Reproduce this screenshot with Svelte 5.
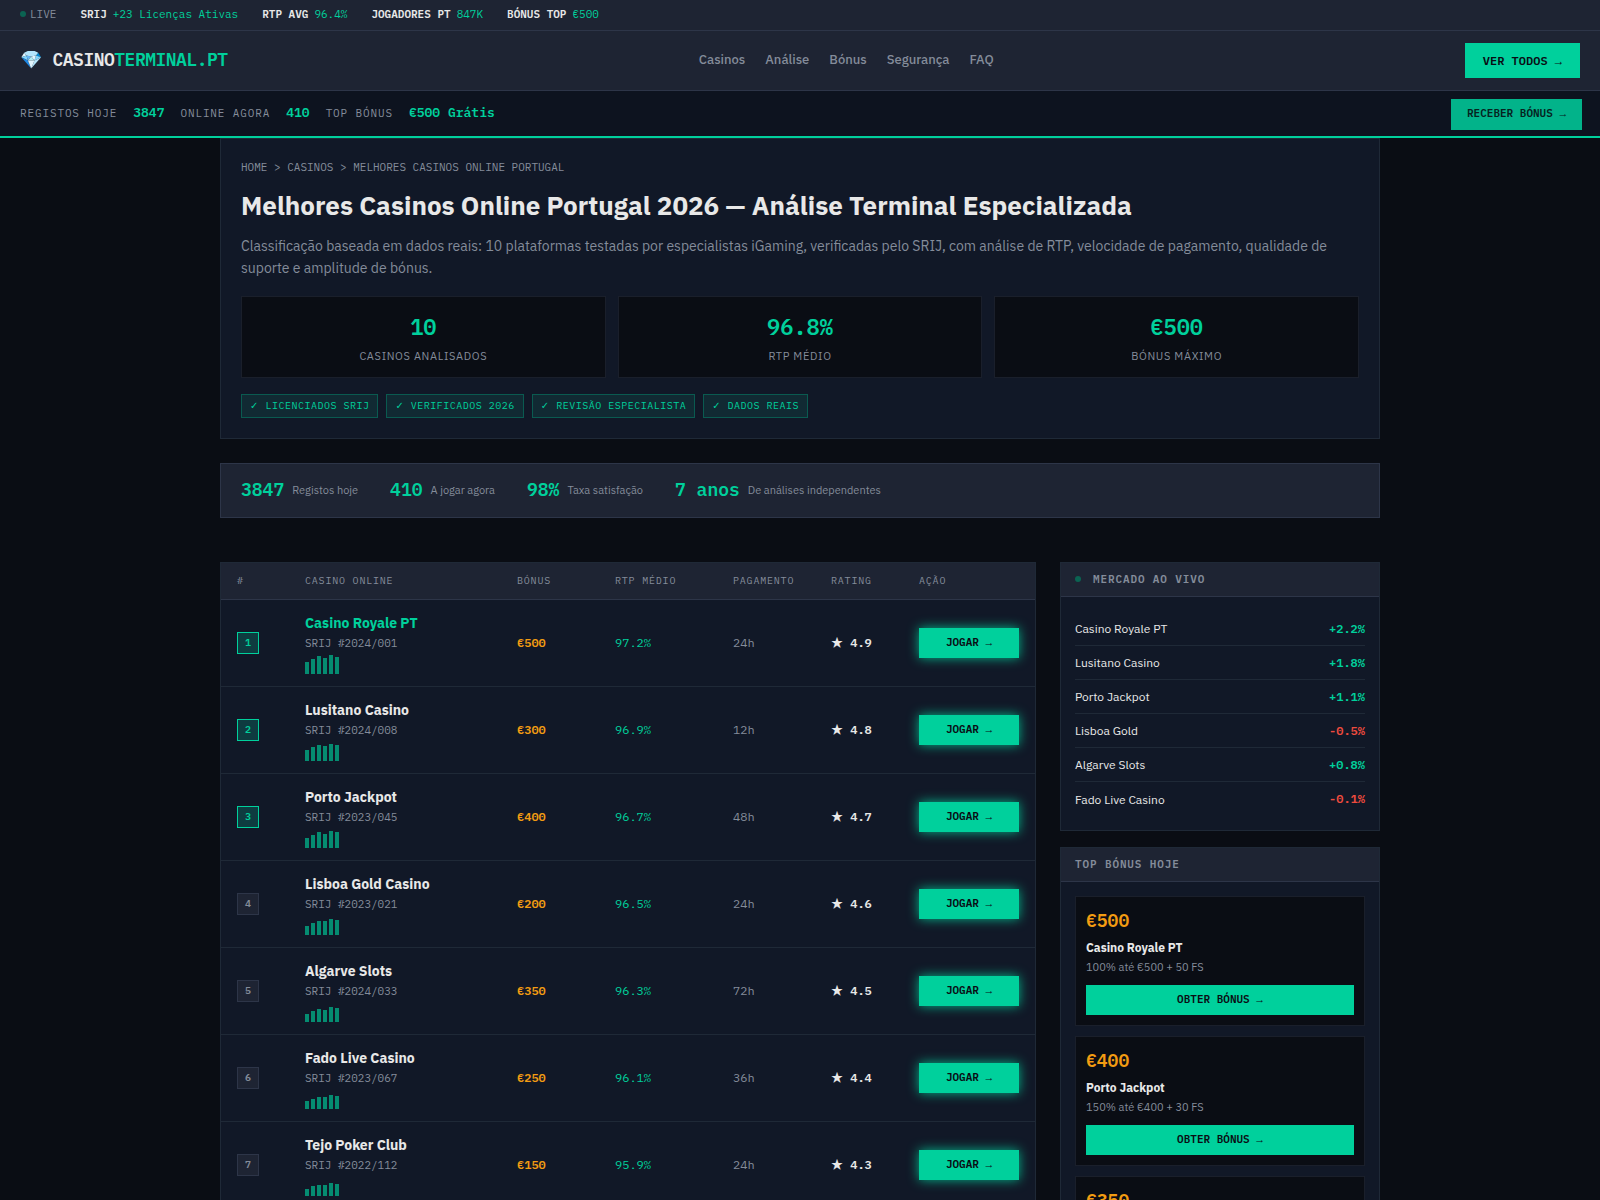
<script>
  const ticker = [
    ['SRIJ', '+23 Licenças Ativas'],
    ['RTP AVG', '96.4%'],
    ['JOGADORES PT', '847K'],
    ['BÓNUS TOP', '€500']
  ];
  const nav = ['Casinos', 'Análise', 'Bónus', 'Segurança', 'FAQ'];
  const live = [
    ['REGISTOS HOJE', '3847'],
    ['ONLINE AGORA', '410'],
    ['TOP BÓNUS', '€500 Grátis']
  ];
  const stats = [
    ['10', 'CASINOS ANALISADOS'],
    ['96.8%', 'RTP MÉDIO'],
    ['€500', 'BÓNUS MÁXIMO']
  ];
  const badges = ['LICENCIADOS SRIJ', 'VERIFICADOS 2026', 'REVISÃO ESPECIALISTA', 'DADOS REAIS'];
  const proof = [
    ['3847', 'Registos hoje'],
    ['410', 'A jogar agora'],
    ['98%', 'Taxa satisfação'],
    ['7 anos', 'De análises independentes']
  ];
  const casinos = [
    { name: 'Casino Royale PT', id: '2024/001', bonus: '€500', rtp: '97.2%', pay: '24h', rating: '4.9', bars: [12, 15, 18, 16, 19, 17] },
    { name: 'Lusitano Casino', id: '2024/008', bonus: '€300', rtp: '96.9%', pay: '12h', rating: '4.8', bars: [11, 14, 16, 15, 17, 16] },
    { name: 'Porto Jackpot', id: '2023/045', bonus: '€400', rtp: '96.7%', pay: '48h', rating: '4.7', bars: [10, 13, 16, 14, 17, 16] },
    { name: 'Lisboa Gold Casino', id: '2023/021', bonus: '€200', rtp: '96.5%', pay: '24h', rating: '4.6', bars: [9, 12, 14, 14, 16, 15] },
    { name: 'Algarve Slots', id: '2024/033', bonus: '€350', rtp: '96.3%', pay: '72h', rating: '4.5', bars: [8, 11, 13, 12, 15, 14] },
    { name: 'Fado Live Casino', id: '2023/067', bonus: '€250', rtp: '96.1%', pay: '36h', rating: '4.4', bars: [8, 10, 12, 12, 14, 13] },
    { name: 'Tejo Poker Club', id: '2022/112', bonus: '€150', rtp: '95.9%', pay: '24h', rating: '4.3', bars: [7, 10, 11, 11, 13, 12] }
  ];
  const market = [
    ['Casino Royale PT', '+2.2%'],
    ['Lusitano Casino', '+1.8%'],
    ['Porto Jackpot', '+1.1%'],
    ['Lisboa Gold', '-0.5%'],
    ['Algarve Slots', '+0.8%'],
    ['Fado Live Casino', '-0.1%']
  ];
  const offers = [
    ['€500', 'Casino Royale PT', '100% até €500 + 50 FS'],
    ['€400', 'Porto Jackpot', '150% até €400 + 30 FS'],
    ['€350', 'Algarve Slots', '100% até €350 + 40 FS']
  ];
</script>

<div class="ticker">
  <span class="live"><i class="dot"></i>LIVE</span>
  {#each ticker as [label, value]}
    <span class="quote"><b>{label}</b><span class="up">{value}</span></span>
  {/each}
</div>

<header class="header">
  <a class="logo" href="#top"><span class="gem">💎</span><span>CASINO<span class="up">TERMINAL.PT</span></span></a>
  <nav>
    {#each nav as item}<a href="#{item}">{item}</a>{/each}
  </nav>
  <button class="btn large">VER TODOS <span class="sym">→</span></button>
</header>

<div class="livebar">
  {#each live as [label, value]}
    <span class="label">{label}</span>
    <b class="up">{value}</b>
  {/each}
  <button class="btn pulse">RECEBER BÓNUS <span class="sym">→</span></button>
</div>

<main>
  <section class="hero">
    <div class="crumbs"><a href="#home">HOME</a> &gt; <a href="#casinos">CASINOS</a> &gt; MELHORES CASINOS ONLINE PORTUGAL</div>
    <h1>Melhores Casinos Online Portugal 2026 — Análise Terminal Especializada</h1>
    <p>Classificação baseada em dados reais: 10 plataformas testadas por especialistas iGaming, verificadas pelo SRIJ, com análise de RTP, velocidade de pagamento, qualidade de suporte e amplitude de bónus.</p>
    <div class="stats">
      {#each stats as [value, label]}
        <div class="stat"><div class="value">{value}</div><div class="name">{label}</div></div>
      {/each}
    </div>
    <div class="badges">
      {#each badges as badge}<span class="badge"><span class="check">✓</span> {badge}</span>{/each}
    </div>
  </section>

  <section class="proof">
    {#each proof as [value, label]}
      <div class="fact"><b>{value}</b><span>{label}</span></div>
    {/each}
  </section>

  <div class="columns">
    <div class="panel">
      <table>
        <colgroup>
          <col class="c-rank" /><col /><col class="c-bonus" /><col class="c-rtp" /><col class="c-pay" /><col class="c-rating" /><col class="c-action" />
        </colgroup>
        <thead>
          <tr><th>#</th><th>CASINO ONLINE</th><th>BÓNUS</th><th>RTP MÉDIO</th><th>PAGAMENTO</th><th>RATING</th><th>AÇÃO</th></tr>
        </thead>
        <tbody>
          {#each casinos as c, i}
            <tr>
              <td><span class="rank" class:top={i < 3}>{i + 1}</span></td>
              <td>
                <div class="casino" class:up={i === 0}>{c.name}</div>
                <div class="licence">SRIJ #{c.id}</div>
                <div class="spark">
                  {#each c.bars as h}<i style="height: {h}px"></i>{/each}
                </div>
              </td>
              <td class="bonus">{c.bonus}</td>
              <td class="up">{c.rtp}</td>
              <td class="dim">{c.pay}</td>
              <td class="rating"><span class="star">★</span> {c.rating}</td>
              <td><button class="btn glow">JOGAR <span class="sym">→</span></button></td>
            </tr>
          {/each}
        </tbody>
      </table>
    </div>

    <aside>
      <section class="panel">
        <h2><i class="dot"></i>MERCADO AO VIVO</h2>
        <ul class="market">
          {#each market as [name, change]}
            <li><span>{name}</span><b class={change[0] === '+' ? 'up' : 'down'}>{change}</b></li>
          {/each}
        </ul>
      </section>
      <section class="panel">
        <h2>TOP BÓNUS HOJE</h2>
        <div class="offers">
          {#each offers as [amount, name, terms]}
            <div class="offer">
              <div class="amount">{amount}</div>
              <div class="who">{name}</div>
              <div class="terms">{terms}</div>
              <button class="btn">OBTER BÓNUS <span class="sym">→</span></button>
            </div>
          {/each}
        </div>
      </section>
    </aside>
  </div>
</main>

<style>
  :global(body) {
    --sans: 'IBM Plex Sans', 'Noto Sans', sans-serif;
    --mono: 'IBM Plex Mono', 'Liberation Mono', monospace;
    --bg: #0a0d14;
    --panel: #111827;
    --raised: #1e2433;
    --line: #1f2937;
    --line-strong: #2d3548;
    --text: #e8e8e8;
    --dim: #848c9a;
    --green: #00d09c;
    --amber: #f39c12;
    --red: #ee4b3e;
    margin: 0;
    background: var(--bg);
    color: var(--text);
    font-family: var(--sans);
    font-size: 14px;
  }
  a { color: inherit; text-decoration: none; }
  b { font-weight: 600; }
  .up { color: var(--green); }
  .down { color: var(--red); }
  .dim { color: var(--dim); }
  .dot {
    display: inline-block;
    width: 6px;
    height: 6px;
    border-radius: 50%;
    background: #0b6352;
  }
  .btn {
    box-sizing: border-box;
    height: 30px;
    padding: 0 14px 2px;
    border: 0;
    border-radius: 0;
    background: var(--green);
    color: #0a0d14;
    font: 600 11px/18px var(--mono);
    cursor: pointer;
  }
  .sym { font-family: 'Liberation Mono', serif; line-height: 1; }
  .star { font-family: 'Noto Sans CJK JP', sans-serif; line-height: 1; }
  .check { font-family: 'DejaVu Sans', sans-serif; line-height: 1; }

  .ticker {
    display: flex;
    gap: 24px;
    padding: 5px 20px 7px;
    background: var(--raised);
    border-bottom: 1px solid var(--line-strong);
    font: 11px/18px var(--mono);
  }
  .live { display: flex; align-items: center; gap: 4px; color: var(--dim); }
  .quote { display: flex; gap: 6px; }

  .header {
    display: flex;
    align-items: center;
    justify-content: space-between;
    padding: 12px 20px;
    background: var(--raised);
    border-bottom: 1px solid var(--line-strong);
  }
  .logo {
    display: flex;
    gap: 11px;
    padding-bottom: 2px;
    font: 600 18px/28px var(--mono);
    letter-spacing: -0.5px;
  }
  nav { display: flex; gap: 20px; padding-bottom: 2px; color: var(--dim); font-size: 13px; font-weight: 500; line-height: 21px; }
  .large { height: 35px; padding: 0 18px; font-size: 12px; }

  .livebar {
    display: flex;
    align-items: center;
    gap: 16px;
    height: 43px;
    padding: 2px 18px 0 20px;
    background: #0d131f;
    border-bottom: 2px solid var(--green);
    font: 11px/18px var(--mono);
  }
  .livebar .label { padding-bottom: 4px; color: var(--dim); letter-spacing: 0.08em; }
  .livebar b { padding-bottom: 4px; font-size: 13px; }
  .pulse { height: 31px; margin-left: auto; padding: 0 16px 3px; background: #02b38a; color: #07231f; }

  main { max-width: 1160px; margin: 0 auto; }
  .hero {
    padding: 20px;
    background: var(--panel);
    border: 1px solid var(--line);
  }
  .crumbs { color: var(--dim); font: 11px/17px var(--mono); }
  h1 { margin: 14px 0; font-size: 26px; line-height: 31px; font-weight: 700; }
  .hero p { margin: 0 0 17px; color: var(--dim); line-height: 22px; }
  .stats { display: grid; grid-template-columns: repeat(3, 1fr); gap: 12px; }
  .stat {
    padding: 12px;
    background: var(--bg);
    border: 1px solid #1a1f2b;
    text-align: center;
  }
  .value { color: var(--green); font: 600 22px/36px var(--mono); }
  .name { margin-top: 2px; color: var(--dim); font-size: 11px; line-height: 18px; letter-spacing: 0.06em; }
  .badges { display: flex; flex-wrap: wrap; gap: 8px; margin-top: 16px; }
  .badge {
    padding: 3px 8px;
    background: #112a33;
    border: 1px solid #0a5a50;
    color: var(--green);
    font: 10px/16px var(--mono);
    letter-spacing: 0.05em;
  }

  .proof {
    display: flex;
    flex-wrap: wrap;
    gap: 32px;
    margin-top: 24px;
    padding: 11px 20px 13px;
    background: var(--raised);
    border: 1px solid var(--line-strong);
  }
  .fact { display: flex; align-items: center; gap: 8px; color: var(--dim); font-size: 11px; }
  .fact b { color: var(--green); font: 600 18px/29px var(--mono); }

  .columns {
    display: grid;
    grid-template-columns: minmax(0, 1fr) 320px;
    align-items: start;
    gap: 24px;
    margin-top: 44px;
  }
  .panel { background: var(--panel); border: 1px solid var(--line); }
  aside { display: grid; gap: 16px; }

  table { width: 100%; table-layout: fixed; border-collapse: separate; border-spacing: 0; }
  .c-rank { width: 68px; }
  .c-bonus, .c-pay { width: 98px; }
  .c-rtp { width: 118px; }
  .c-rating { width: 88px; }
  .c-action { width: 132px; }
  th {
    padding: 10px 16px;
    background: var(--raised);
    border-bottom: 1px solid var(--line-strong);
    color: var(--dim);
    font: 400 10px/16px var(--mono);
    letter-spacing: 0.08em;
    text-align: left;
    white-space: nowrap;
  }
  td {
    padding: 12px 16px;
    border-bottom: 1px solid var(--line);
    font: 12px/20px var(--mono);
    white-space: nowrap;
  }
  .rank {
    box-sizing: border-box;
    display: flex;
    align-items: center;
    justify-content: center;
    width: 22px;
    height: 22px;
    background: var(--raised);
    border: 1px solid var(--line-strong);
    color: var(--dim);
    font-size: 10px;
    font-weight: 600;
  }
  .rank.top { background: #0e3c40; border-color: var(--green); color: var(--green); }
  .casino { font: 700 14px/22px var(--sans); }
  .licence { color: var(--dim); font-size: 11px; line-height: 18px; }
  .spark { display: flex; align-items: flex-end; gap: 2px; height: 20px; margin-top: 2px; }
  .spark i { width: 4px; background: #058c71; }
  .bonus { color: var(--amber); font-weight: 600; }
  .rating { font-weight: 600; }
  .glow { width: 100%; box-shadow: 0 0 12px rgba(0, 208, 156, 0.85); }
  td .btn { display: block; }

  h2 {
    display: flex;
    align-items: center;
    gap: 12px;
    margin: 0;
    padding: 7px 14px 8px;
    background: var(--raised);
    border-bottom: 1px solid var(--line-strong);
    color: var(--dim);
    font: 600 11px/18px var(--mono);
    letter-spacing: 0.08em;
  }
  .market { margin: 0; padding: 15px 14px 14px; list-style: none; }
  .market li {
    box-sizing: border-box;
    display: flex;
    align-items: center;
    justify-content: space-between;
    height: 34px;
    border-bottom: 1px solid var(--line);
    font-size: 12px;
  }
  .market li:last-child { border-bottom: 0; }
  .market b { font: 600 12px/20px var(--mono); }
  .offers { display: grid; gap: 10px; padding: 14px; }
  .offer { padding: 10px; background: var(--bg); border: 1px solid #1a1f2b; }
  .amount { color: var(--amber); font: 600 18px/27px var(--mono); }
  .who { margin-top: 4px; font-size: 12px; font-weight: 700; line-height: 19px; }
  .terms { color: var(--dim); font-size: 11px; line-height: 20px; }
  .offer .btn { display: block; width: 100%; margin-top: 8px; }
</style>
